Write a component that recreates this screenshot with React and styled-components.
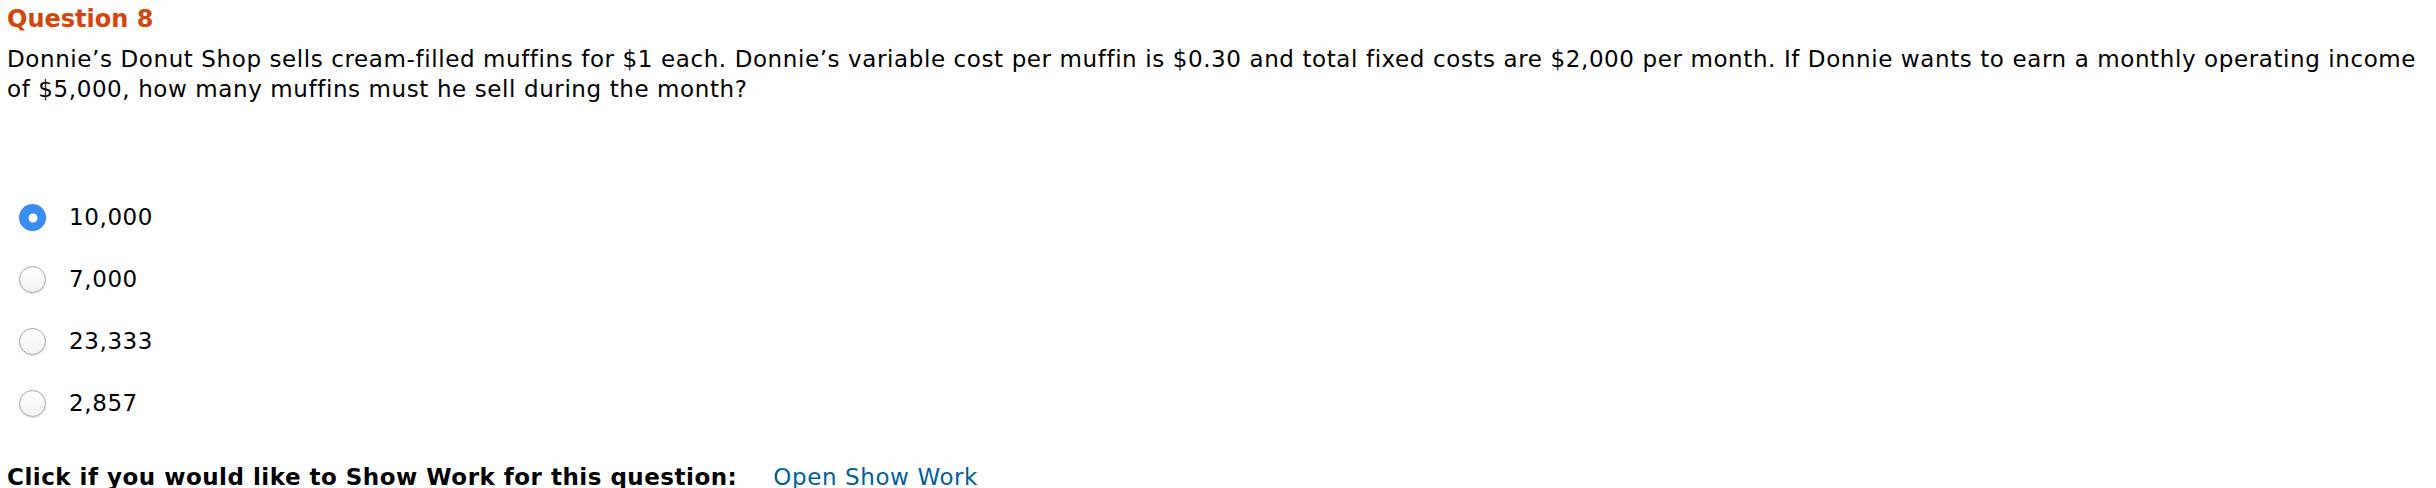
import React from 'react'
import styled, { createGlobalStyle } from 'styled-components'

const GlobalStyle = createGlobalStyle`
	html,
	body {
		margin: 0;
		padding: 0;
		background: #ffffff;
	}

	body {
		font-family: 'DejaVu Sans', Verdana, sans-serif;
		color: #000000;
	}
`

const options = ['10,000', '7,000', '23,333', '2,857']

const App = () => {
	return (
		<>
			<GlobalStyle />
			<Page>
				<Title>Question 8</Title>
				<Prompt>
					Donnie’s Donut Shop sells cream-filled muffins for $1 each. Donnie’s variable cost per
					muffin is $0.30 and total fixed costs are $2,000 per month. If Donnie wants to earn a
					monthly operating income of $5,000, how many muffins must he sell during the month?
				</Prompt>
				<Options>
					{options.map((option, index) => (
						<Option key={option}>
							<Radio $checked={index === 0} />
							<OptionText>{option}</OptionText>
						</Option>
					))}
				</Options>
				<ShowWork>
					<ShowWorkLabel>Click if you would like to Show Work for this question:</ShowWorkLabel>
					<ShowWorkLink href="#">Open Show Work</ShowWorkLink>
				</ShowWork>
			</Page>
		</>
	)
}

export default App

const Page = styled.div`
	padding: 4px 10px 0 7px;
	width: 2436px;
	box-sizing: border-box;
	height: 488px;
	overflow: hidden;
`

const Title = styled.h2`
	margin: 0;
	font-size: 24px;
	line-height: 30px;
	font-weight: bold;
	color: #d4450c;
`

const Prompt = styled.p`
	margin: 10px 0 0;
	font-size: 23px;
	line-height: 30px;
	letter-spacing: 0.6px;
`

const Options = styled.div`
	display: flex;
	flex-direction: column;
	gap: 35px;
	margin-top: 100px;
`

const Option = styled.label`
	display: flex;
	align-items: center;
	gap: 23px;
	padding-left: 12px;
	height: 27px;
`

const Radio = styled.span`
	width: 27px;
	height: 27px;
	border-radius: 50%;
	box-sizing: border-box;
	flex: none;
	position: relative;
	background: ${({ $checked }) => ($checked ? '#3a8cf7' : 'linear-gradient(#ffffff, #f2f2f2)')};
	border: ${({ $checked }) => ($checked ? 'none' : '1px solid #a5a5a5')};
	box-shadow: ${({ $checked }) =>
		$checked ? 'inset 0 -1px 1px rgba(0, 0, 0, 0.08)' : '0 1px 1px rgba(0, 0, 0, 0.12)'};

	&::after {
		content: '';
		display: ${({ $checked }) => ($checked ? 'block' : 'none')};
		position: absolute;
		top: 50%;
		left: 50%;
		width: 9px;
		height: 9px;
		border-radius: 50%;
		background: #ffffff;
		transform: translate(-50%, -50%);
	}
`

const OptionText = styled.span`
	font-size: 23px;
	line-height: 27px;
	letter-spacing: 0.6px;
`

const ShowWork = styled.div`
	display: flex;
	align-items: baseline;
	margin-top: 47px;
	font-size: 23px;
`

const ShowWorkLabel = styled.span`
	font-weight: bold;
	letter-spacing: 0.5px;
`

const ShowWorkLink = styled.a`
	margin-left: 36px;
	color: #005f99;
	text-decoration: none;
	letter-spacing: 0.6px;
`
